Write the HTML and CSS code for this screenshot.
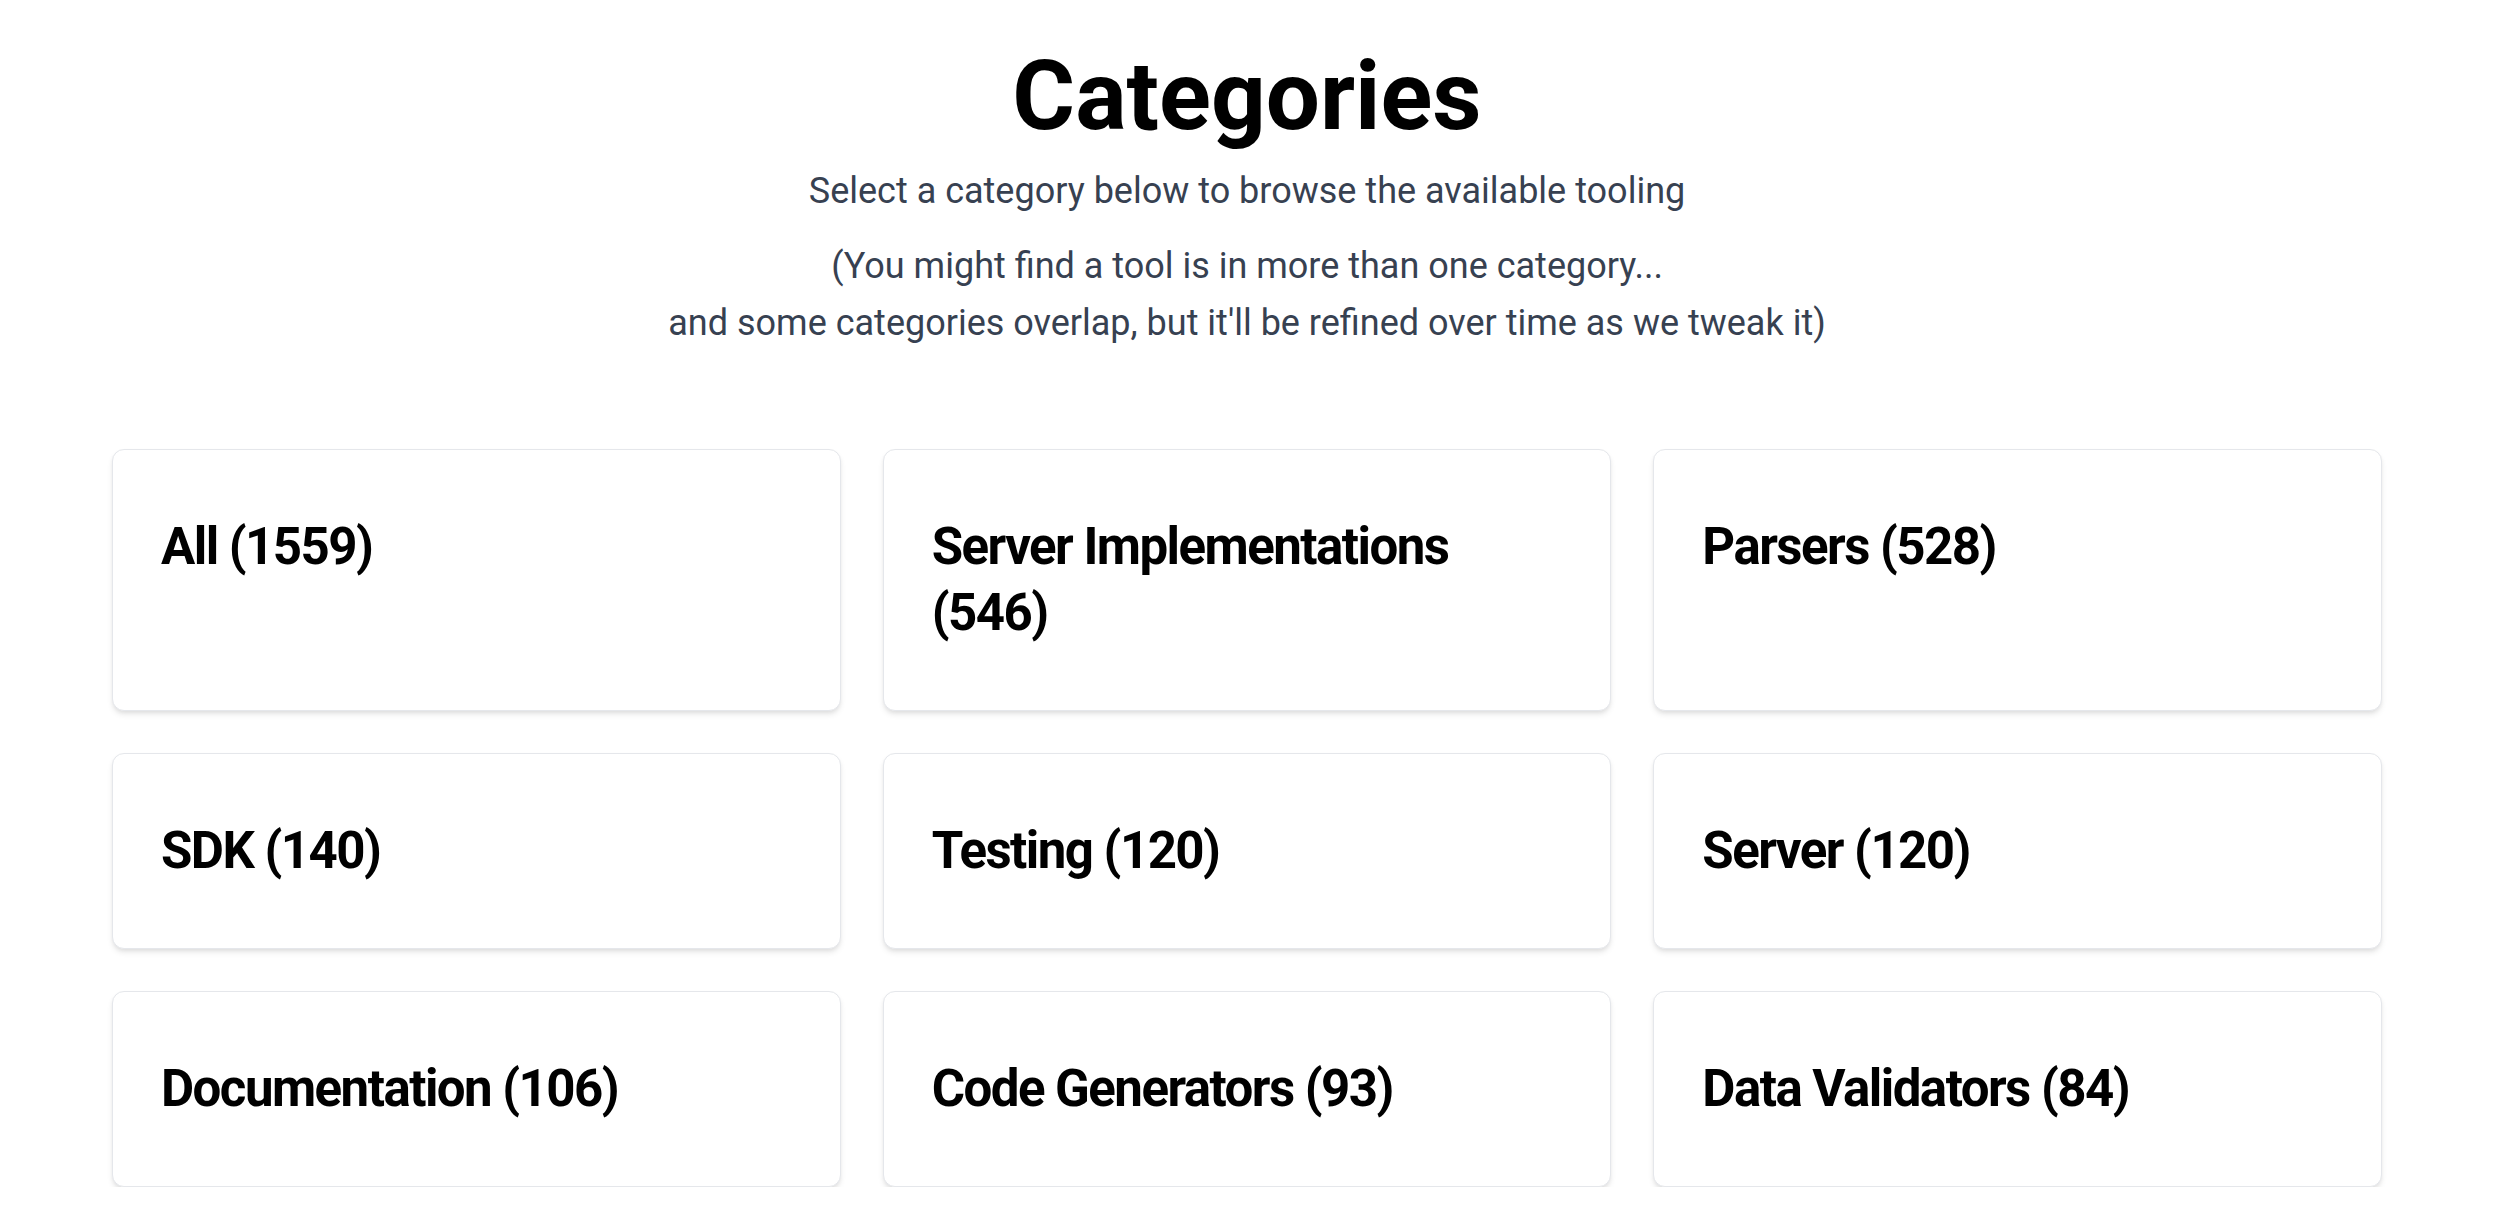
FILE: index.html
```html
<!DOCTYPE html>
<html lang="en">
<head>
<meta charset="utf-8">
<title>Categories</title>
<link rel="stylesheet" href="styles.css">
</head>
<body>
<main class="page">
  <header class="intro">
    <h1 class="title">Categories</h1>
    <p class="lead">Select a category below to browse the available tooling</p>
    <p class="note">(You might find a tool is in more than one category...<br>and some categories overlap, but it'll be refined over time as we tweak it)</p>
  </header>
  <section class="grid">
    <a class="card" href="#"><span class="card-title">All (1559)</span></a>
    <a class="card" href="#"><span class="card-title">Server Implementations (546)</span></a>
    <a class="card" href="#"><span class="card-title">Parsers (528)</span></a>
    <a class="card" href="#"><span class="card-title">SDK (140)</span></a>
    <a class="card" href="#"><span class="card-title">Testing (120)</span></a>
    <a class="card" href="#"><span class="card-title">Server (120)</span></a>
    <a class="card" href="#"><span class="card-title">Documentation (106)</span></a>
    <a class="card" href="#"><span class="card-title">Code Generators (93)</span></a>
    <a class="card" href="#"><span class="card-title">Data Validators (84)</span></a>
  </section>
</main>
</body>
</html>
```

FILE: styles.css
```css
html, body {
  margin: 0;
  padding: 0;
  background: #ffffff;
  overflow: hidden;
}

body {
  font-family: Roboto, "Liberation Sans", Arial, sans-serif;
  color: #000;
}

.page {
  padding: 48px 126px 0 112px;
}

.intro {
  text-align: center;
}

.title {
  margin: 0;
  font-size: 96px;
  line-height: 96px;
  font-weight: 700;
  color: #000;
}

.lead {
  margin: 19px 0 0;
  font-size: 36px;
  line-height: 57px;
  color: #374151;
}

.note {
  margin: 18px 0 0;
  font-size: 36px;
  line-height: 57px;
  color: #374151;
}

.grid {
  margin-top: 97px;
  display: grid;
  grid-template-columns: repeat(3, 1fr);
  gap: 42px 42px;
}

.card {
  display: block;
  padding: 64px 48px;
  background: #fff;
  border: 1px solid #e5e7eb;
  border-radius: 12px;
  box-shadow: 0 4px 6px -1px rgba(0, 0, 0, 0.1), 0 2px 4px -1px rgba(0, 0, 0, 0.06);
  text-decoration: none;
  color: #000;
}

.card-title {
  display: block;
  font-size: 51px;
  line-height: 66px;
  font-weight: 700;
  letter-spacing: -0.03em;
  color: #000;
}
```
